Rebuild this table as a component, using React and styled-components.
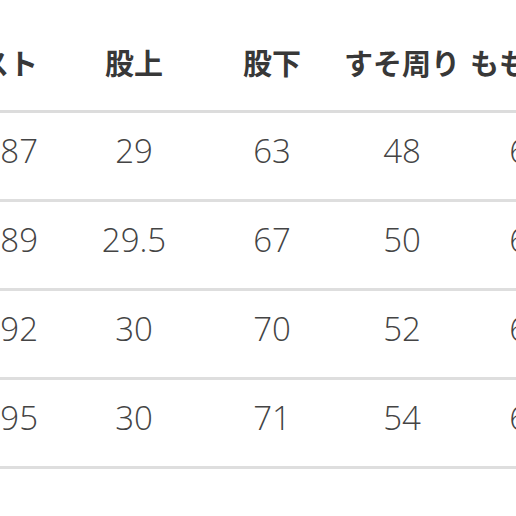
import React from "react";
import styled, { createGlobalStyle } from "styled-components";

const GlobalStyle = createGlobalStyle`
  html, body {
    margin: 0;
    padding: 0;
    background: #ffffff;
    overflow: hidden;
  }
`;

const columns = ["ウエスト", "股上", "股下", "すそ周り", "もも周り"];

const rows = [
  ["87", "29", "63", "48", "62"],
  ["89", "29.5", "67", "50", "64"],
  ["92", "30", "70", "52", "66"],
  ["95", "30", "71", "54", "68"],
];

const Viewport = styled.div`
  width: 516px;
  height: 516px;
  overflow: hidden;
  background: #fff;
`;

const Table = styled.div`
  display: grid;
  grid-template-columns: 140px 138px 138px 122px 130px;
  margin-left: -75px;
  width: max-content;
`;

const HeadCell = styled.div`
  height: 113px;
  box-sizing: border-box;
  border-bottom: 3px solid #dcdcdc;
  display: flex;
  align-items: center;
  justify-content: ${(p) => (p.$first ? "flex-end" : "center")};
  padding: 14px ${(p) => (p.$first ? "27px" : "0")} 0 0;
  font-family: "Noto Sans CJK JP", "Noto Sans", sans-serif;
  font-weight: 700;
  font-size: 29px;
  line-height: 1;
  color: #383838;
  white-space: nowrap;
`;

const Cell = styled.div`
  height: 89px;
  box-sizing: border-box;
  border-bottom: 3px solid #dedede;
  display: flex;
  align-items: center;
  justify-content: ${(p) => (p.$first ? "flex-end" : "center")};
  padding: 0 ${(p) => (p.$first ? "27px" : "0")} 12px 0;
  font-family: "Open Sans", "Liberation Sans", sans-serif;
  font-weight: 300;
  font-size: 33px;
  line-height: 1;
  color: #444;
  white-space: nowrap;
`;

export default function App() {
  return (
    <>
      <GlobalStyle />
      <Viewport>
        <Table>
          {columns.map((c, i) => (
            <HeadCell key={c} $first={i === 0}>
              {c}
            </HeadCell>
          ))}
          {rows.map((r, ri) =>
            r.map((v, ci) => (
              <Cell key={`${ri}-${ci}`} $first={ci === 0}>
                {v}
              </Cell>
            ))
          )}
        </Table>
      </Viewport>
    </>
  );
}
